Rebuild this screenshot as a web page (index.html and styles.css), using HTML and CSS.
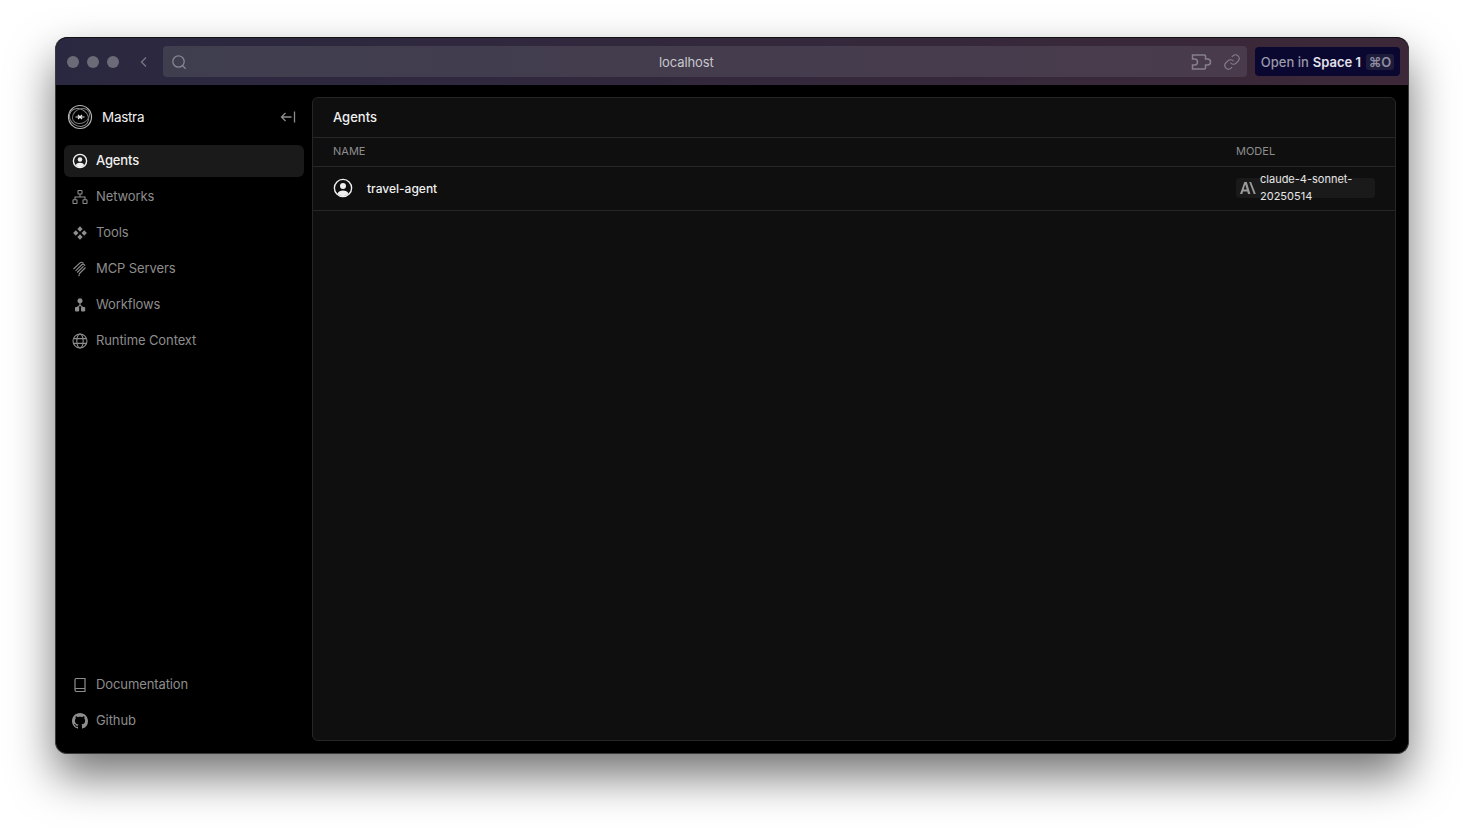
FILE: index.html
```html
<html>
<head>
    <title>Mastra</title>
    <link rel="stylesheet" href="styles.css">
</head>
<body>
    <div class="window">
        <div class="titlebar">
            <div class="lights"><span></span><span></span><span></span></div>
            <svg class="back" width="16" height="16" viewBox="0 0 16 16"><path d="M10 3.500 5.500 8l4.500 4.500"/></svg>
            <div class="urlbar">
                <svg class="url-search" width="18" height="18" viewBox="0 0 18 18"><circle cx="8.500" cy="8.500" r="5.700"/><path d="m12.700 12.700 3 3"/></svg>
                <span class="url-text">localhost</span>
                <svg class="url-icon" width="22" height="20" viewBox="0 0 22 20"><path d="M2.500 3h12a1 1 0 0 1 1 1v3h2a3 3 0 0 1 0 6h-2v3a1 1 0 0 1-1 1h-12v-4h2a2.500 2.500 0 0 0 0-6h-2z"/></svg>
                <svg class="url-icon" width="18" height="18" viewBox="0 0 24 24"><path d="M10 13a5 5 0 0 0 7.500.5l3-3a5 5 0 0 0-7-7l-1.700 1.700"/><path d="M14 11a5 5 0 0 0-7.500-.5l-3 3a5 5 0 0 0 7 7l1.700-1.700"/></svg>
            </div>
            <div class="open-space">
                <span class="open-label">Open in</span>
                <span class="open-name">Space 1</span>
                <span class="open-key">⌘O</span>
            </div>
        </div>
        <div class="app">
            <aside class="sidebar">
                <div class="brand">
                    <svg class="logo" width="26" height="26" viewBox="0 0 26 26">
                        <circle cx="13" cy="13" r="11.500" stroke="#b5b5b5" stroke-width="1.200"/>
                        <ellipse cx="12" cy="13.500" rx="10" ry="8.500" stroke="#8a8a8a" stroke-width="1" transform="rotate(35 12 13.500)"/>
                        <ellipse cx="14" cy="12" rx="9" ry="7" stroke="#777" stroke-width="1" transform="rotate(-30 14 12)"/>
                        <path d="M8.500 13h9M11 11l2 2-2 2M15 11l-2 2 2 2" stroke="#e6e6e6" stroke-width="1.200"/>
                    </svg>
                    <span class="brand-name">Mastra</span>
                    <svg class="collapse" width="16" height="16" viewBox="0 0 16 16"><path d="M14.500 2.500v11M11.500 8h-10M5.500 4l-4 4 4 4"/></svg>
                </div>
                <nav class="nav">
                    <a class="nav-item active">
                        <svg class="nav-icon" width="16" height="16" viewBox="0 0 16 16"><circle cx="8" cy="8" r="6.600" stroke="currentColor" stroke-width="1.400" fill="none"/><circle cx="8" cy="6.500" r="2.300" fill="currentColor"/><path d="M3.700 12.300C4.500 10.500 6 9.800 8 9.800s3.500.7 4.300 2.500A6 6 0 0 1 8 14.200a6 6 0 0 1-4.300-1.900z" fill="currentColor"/></svg>
                        Agents
                    </a>
                    <a class="nav-item">
                        <svg class="nav-icon" width="16" height="16" viewBox="0 0 16 16" fill="none" stroke="currentColor" stroke-width="1.100"><rect x="6" y="1.500" width="4" height="3.500" rx=".6"/><rect x="1" y="10.800" width="4" height="3.700" rx=".6"/><rect x="11" y="10.800" width="4" height="3.700" rx=".6"/><path d="M8 5v3M3 10.800V8h10v2.800"/></svg>
                        Networks
                    </a>
                    <a class="nav-item">
                        <svg class="nav-icon" width="16" height="16" viewBox="0 0 16 16" fill="currentColor"><path d="M8 1.300 10.700 4 8 6.700 5.300 4zM3.800 5.300 6.500 8 3.800 10.700 1.100 8zM12.200 5.300 14.900 8l-2.700 2.700L9.500 8zM8 9.300l2.700 2.700L8 14.700 5.300 12z"/></svg>
                        Tools
                    </a>
                    <a class="nav-item">
                        <svg class="nav-icon" width="16" height="16" viewBox="0 0 16 16" fill="none" stroke="currentColor" stroke-width="1.100"><path d="M1.500 8 8 1.800M3.500 9.800 10 3.500M5.200 11.500l6.400-6.300M7 13l6.500-6.500M8 1.800c1.500-1 3-.3 3.500.8M10 3.500c1.500-.6 2.700.2 3 1.300M7 13c.5 1 0 1.800-.5 2"/></svg>
                        MCP Servers
                    </a>
                    <a class="nav-item">
                        <svg class="nav-icon" width="16" height="16" viewBox="0 0 16 16" fill="currentColor"><circle cx="8" cy="3.800" r="2.500"/><rect x="3" y="10" width="4.200" height="4.400" rx=".8"/><rect x="9" y="10" width="4.200" height="4.400" rx=".8"/><path d="M7.400 5h1.200v3l2.700 2h-1.700L8 8.900 6.400 10H4.700l2.700-2z"/></svg>
                        Workflows
                    </a>
                    <a class="nav-item">
                        <svg class="nav-icon" width="16" height="16" viewBox="0 0 16 16" fill="none" stroke="currentColor" stroke-width="1.100"><circle cx="8" cy="8" r="7"/><ellipse cx="8" cy="8" rx="3.200" ry="7"/><path d="M1.600 5.600h12.800M1.600 10.400h12.800"/></svg>
                        Runtime Context
                    </a>
                </nav>
                <nav class="nav nav-bottom">
                    <a class="nav-item">
                        <svg class="nav-icon" width="16" height="16" viewBox="0 0 16 16" fill="none" stroke="currentColor" stroke-width="1.200"><path d="M3 13V2.800c0-.7.5-1.300 1.200-1.300H13v13H4.300C3.600 14.500 3 13.800 3 13zm0 0c0-.8.600-1.500 1.300-1.500H13"/></svg>
                        Documentation
                    </a>
                    <a class="nav-item">
                        <svg class="nav-icon" width="16" height="16" viewBox="0 0 16 16" fill="currentColor"><path d="M8 0C3.580 0 0 3.580 0 8c0 3.540 2.290 6.530 5.470 7.590.4.070.55-.17.55-.38 0-.19-.01-.82-.01-1.490-2.010.37-2.530-.49-2.690-.94-.09-.23-.48-.94-.82-1.130-.28-.15-.68-.52-.01-.53.63-.01 1.080.58 1.230.82.72 1.210 1.870.87 2.330.66.070-.52.28-.87.51-1.070-1.780-.2-3.640-.89-3.640-3.950 0-.87.310-1.590.82-2.150-.08-.2-.36-1.020.08-2.120 0 0 .67-.21 2.200.82.64-.18 1.320-.27 2-.27s1.360.09 2 .27c1.530-1.040 2.200-.82 2.200-.82.440 1.100.160 1.920.080 2.120.51.560.82 1.270.82 2.150 0 3.070-1.870 3.750-3.650 3.950.29.250.54.730.54 1.480 0 1.070-.01 1.930-.01 2.200 0 .21.150.46.550.38A8.010 8.010 0 0 0 16 8c0-4.420-3.580-8-8-8z"/></svg>
                        Github
                    </a>
                </nav>
            </aside>
            <main class="panel">
                <header class="panel-head">Agents</header>
                <div class="table-row table-head">
                    <span class="col-name">NAME</span>
                    <span class="col-model">MODEL</span>
                </div>
                <div class="table-row agent-row">
                    <span class="col-name agent-name">
                        <svg width="20" height="20" viewBox="0 0 16 16"><circle cx="8" cy="8" r="6.900" stroke="currentColor" stroke-width="1.100" fill="none"/><circle cx="8" cy="6.300" r="2.400" fill="currentColor"/><path d="M3.500 12.500C4.300 10.700 6 10 8 10s3.700.7 4.500 2.500A6.200 6.200 0 0 1 8 14.500a6.200 6.200 0 0 1-4.500-2z" fill="currentColor"/></svg>
                        <span class="agent-label">travel-agent</span>
                    </span>
                    <span class="col-model">
                        <span class="model-badge">
                            <svg class="model-logo" width="16" height="12" viewBox="0 0 16 12"><path d="M4.300 0h2.500l3.600 12H8L7.300 9.400H3.100L2.300 12H0zM3.700 7.400h3L5.200 2.500zM9.200 0h1.900l4.700 12h-2z"/></svg>
                            <span class="model-text">claude-4-sonnet-20250514</span>
                        </span>
                    </span>
                </div>
            </main>
        </div>
    </div>
</body>
</html>
```

FILE: styles.css
```css
html, body {
    height: 100%;
}
body {
    margin: 0;
    padding: 37px 55px 73px;
    box-sizing: border-box;
    background: #fff;
    font-family: Inter, "Liberation Sans", sans-serif;
    overflow: hidden;
}
svg {
    flex: none;
}
.window {
    height: 717px;
    box-sizing: border-box;
    display: flex;
    flex-direction: column;
    border: 1px solid #3a3a3a;
    border-top-color: #111;
    border-radius: 12px;
    overflow: hidden;
    background: #000;
    box-shadow: 0 22px 45px rgba(0, 0, 0, 0.55);
}
.titlebar {
    height: 47px;
    flex: none;
    display: flex;
    align-items: center;
    padding: 0 8px 0 11px;
    background: linear-gradient(90deg, #2a2840, #3c2838);
}
.lights {
    display: flex;
    gap: 8px;
}
.lights span {
    width: 12px;
    height: 12px;
    border-radius: 50%;
    background: #6b6a76;
}
.back {
    margin: 0 11px 0 17px;
    fill: none;
    stroke: #77757f;
    stroke-width: 1.400;
}
.urlbar {
    flex: 1;
    height: 31px;
    margin-right: 8px;
    border-radius: 4px;
    padding: 0 6px 0 7px;
    display: flex;
    align-items: center;
    gap: 11px;
    background: linear-gradient(90deg, #3f3e4f, #493b4c);
}
.url-search {
    fill: none;
    stroke: #888691;
    stroke-width: 1.300;
}
.url-text {
    flex: 1;
    padding-right: 5px;
    text-align: center;
    font-size: 13px;
    letter-spacing: -0.1px;
    color: #c9c7cc;
}
.url-icon {
    fill: none;
    stroke: #85808a;
    stroke-width: 1.500;
}
.open-space {
    height: 29px;
    padding: 0 6px;
    display: flex;
    align-items: center;
    gap: 4px;
    border-radius: 4px;
    background: #0a0731;
    font-size: 13px;
    font-weight: 500;
    white-space: nowrap;
}
.open-label {
    color: #9a99a8;
}
.open-name {
    color: #e3e2ea;
    font-weight: 600;
}
.open-key {
    width: 28px;
    height: 16px;
    margin-left: 1px;
    display: flex;
    align-items: center;
    justify-content: center;
    border-radius: 3px;
    background: #1e1c3b;
    color: #8f8ea0;
    font-size: 13px;
    font-weight: 600;
}
.app {
    flex: 1;
    min-height: 0;
    display: flex;
    padding: 12px 12px 12px 0;
}
.sidebar {
    width: 256px;
    flex: none;
    display: flex;
    flex-direction: column;
    padding: 0 8px;
    box-sizing: border-box;
}
.brand {
    height: 40px;
    display: flex;
    align-items: center;
    padding: 0 0 0 3px;
    margin-bottom: 8px;
}
.logo {
    fill: none;
}
.brand-name {
    flex: 1;
    margin-left: 9px;
    padding-bottom: 1px;
    font-size: 13.500px;
    letter-spacing: -0.3px;
    color: #f0f0f0;
}
.collapse {
    margin-right: 8px;
    fill: none;
    stroke: #8d8d8d;
    stroke-width: 1.300;
}
.nav {
    display: flex;
    flex-direction: column;
    gap: 4px;
}
.nav-bottom {
    margin-top: auto;
    margin-bottom: 4px;
}
.nav-item {
    height: 32px;
    display: flex;
    align-items: center;
    gap: 8px;
    padding: 0 8px 2px;
    box-sizing: border-box;
    border-radius: 6px;
    font-size: 13px;
    letter-spacing: -0.1px;
    color: #8d8d8d;
}
.nav-icon {
    margin-top: 1px;
}
.nav-item.active {
    background: #1a1a1a;
    color: #f0f0f0;
    font-weight: 500;
    letter-spacing: -0.15px;
}
.panel {
    flex: 1;
    min-width: 0;
    border: 1px solid #262626;
    border-radius: 6px;
    background: #0f0f0f;
}
.panel-head {
    height: 40px;
    box-sizing: border-box;
    padding: 0 20px 2px;
    display: flex;
    align-items: center;
    border-bottom: 1px solid #262626;
    font-size: 13px;
    font-weight: 500;
    color: #f0f0f0;
}
.table-row {
    display: flex;
    align-items: center;
    box-sizing: border-box;
    padding: 0 20px 2px;
    border-bottom: 1px solid #262626;
}
.table-head {
    height: 29px;
    font-size: 11px;
    color: #8d8d8d;
}
.col-name {
    flex: 1;
}
.col-model {
    width: 139px;
}
.agent-row {
    height: 44px;
}
.agent-name {
    display: flex;
    align-items: center;
    gap: 14px;
    font-size: 12px;
    font-weight: 500;
    color: #f0f0f0;
}
.agent-label {
    margin-top: 2px;
}
.model-badge {
    height: 20px;
    display: flex;
    align-items: center;
    gap: 0;
    border-radius: 4px;
    background: #1a1a1a;
}
.model-logo {
    margin: 0 4px;
    fill: #999;
}
.model-text {
    width: 105px;
    font-size: 11px;
    line-height: 17px;
    color: #e6e6e6;
    overflow-wrap: anywhere;
}
```
